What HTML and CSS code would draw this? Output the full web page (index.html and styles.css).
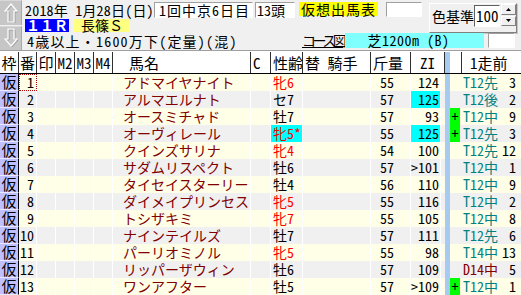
FILE: index.html
```html
<!DOCTYPE html>
<html lang="ja">
<head>
<meta charset="utf-8">
<title>仮想出馬表</title>
<link rel="stylesheet" href="styles.css">
</head>
<body>
<div class="app">
  <div class="top">
    <div class="nav">
      <div class="navbtn">
        <svg width="14" height="20" viewBox="0 0 14 20"><path d="M8 2 L14 9 L11 9 L11 20 L5 20 L5 9 L2 9 Z" fill="none" stroke="#9a9a9a" stroke-width="1"/><path d="M7 1 L13 8 L10 8 L10 19 L4 19 L4 8 L1 8 Z" fill="none" stroke="#fff" stroke-width="1.2"/></svg>
      </div>
      <div class="navbtn">
        <svg width="14" height="20" viewBox="0 0 14 20"><path d="M8 19 L14 12 L11 12 L11 2 L5 2 L5 12 L2 12 Z" fill="none" stroke="#9a9a9a" stroke-width="1"/><path d="M7 18 L13 11 L10 11 L10 1 L4 1 L4 11 L1 11 Z" fill="none" stroke="#fff" stroke-width="1.2"/></svg>
      </div>
    </div>
    <div class="info">
      <div class="line1">
        <span class="date">2018年 1月28日(日)</span>
        <span class="box meet">1回中京6日目</span>
        <span class="box heads">13頭</span>
        <span class="kind">仮想出馬表</span>
        <span class="box empty1"></span>
      </div>
      <div class="colorgrp">
        <span class="clabel">色基準</span>
        <span class="cinput">100</span>
        <span class="spin">
          <span class="sb"><svg width="5" height="3" viewBox="0 0 5 3"><path d="M2.5 0 L5 3 L0 3 Z" fill="#000"/></svg></span>
          <span class="sb"><svg width="5" height="3" viewBox="0 0 5 3"><path d="M0 0 L5 0 L2.5 3 Z" fill="#000"/></svg></span>
        </span>
      </div>
      <div class="line2">
        <span class="race">１１Ｒ</span>
        <span class="rname">長篠Ｓ</span>
      </div>
      <div class="line3">
        <span class="cond">4歳以上・1600万下(定量)(混)</span>
        <span class="course">コース図</span>
        <span class="track">芝1200m (B)</span>
        <span class="box empty2"></span>
      </div>
    </div>
  </div>

  <div class="hdr">
    <span class="c">枠</span><span class="c">番</span><span class="c">印</span><span class="c">M2</span><span class="c">M3</span><span class="c">M4</span>
    <span class="hname">馬名</span><span class="hl">C</span><span class="hl">性齢</span><span class="hl">替 騎手</span><span class="hl">斤量</span>
    <span class="c hzi">ZI</span><span class="bl"></span><span></span><span class="hprev">1走前</span>
  </div>

  <div class="row y"><span class="waku">仮</span><span class="ban focus">1</span><span></span><span></span><span></span><span></span><span class="name">アドマイヤナイト</span><span></span><span class="sa f">牝6</span><span></span><span class="kin">55</span><span class="zi">124</span><span class="pad"></span><span class="bl"></span><span class="mk"></span><span class="prev"><span class="t">T12先</span><span>3</span></span></div>
  <div class="row g"><span class="waku">仮</span><span class="ban">2</span><span></span><span></span><span></span><span></span><span class="name">アルマエルナト</span><span></span><span class="sa">セ7</span><span></span><span class="kin">57</span><span class="zi hi">125</span><span class="pad"></span><span class="bl"></span><span class="mk"></span><span class="prev"><span class="t">T12後</span><span>2</span></span></div>
  <div class="row y"><span class="waku">仮</span><span class="ban">3</span><span></span><span></span><span></span><span></span><span class="name">オースミチャド</span><span></span><span class="sa">牡7</span><span></span><span class="kin">57</span><span class="zi">93</span><span class="pad"></span><span class="bl"></span><span class="mk on">+</span><span class="prev"><span class="t">T12中</span><span>9</span></span></div>
  <div class="row g"><span class="waku">仮</span><span class="ban">4</span><span></span><span></span><span></span><span></span><span class="name">オーヴィレール</span><span></span><span class="sa f hi">牝5*</span><span></span><span class="kin">55</span><span class="zi hi">125</span><span class="pad"></span><span class="bl"></span><span class="mk on">+</span><span class="prev"><span class="t">T12先</span><span>3</span></span></div>
  <div class="row y"><span class="waku">仮</span><span class="ban">5</span><span></span><span></span><span></span><span></span><span class="name">クインズサリナ</span><span></span><span class="sa f">牝4</span><span></span><span class="kin">54</span><span class="zi">100</span><span class="pad"></span><span class="bl"></span><span class="mk"></span><span class="prev"><span class="t">T12先</span><span>12</span></span></div>
  <div class="row g"><span class="waku">仮</span><span class="ban">6</span><span></span><span></span><span></span><span></span><span class="name">サダムリスペクト</span><span></span><span class="sa">牡6</span><span></span><span class="kin">57</span><span class="zi">&gt;101</span><span class="pad"></span><span class="bl"></span><span class="mk"></span><span class="prev"><span class="t">T12中</span><span>1</span></span></div>
  <div class="row y"><span class="waku">仮</span><span class="ban">7</span><span></span><span></span><span></span><span></span><span class="name">タイセイスターリー</span><span></span><span class="sa">牡4</span><span></span><span class="kin">56</span><span class="zi">110</span><span class="pad"></span><span class="bl"></span><span class="mk"></span><span class="prev"><span class="t">T12中</span><span>9</span></span></div>
  <div class="row g"><span class="waku">仮</span><span class="ban">8</span><span></span><span></span><span></span><span></span><span class="name">ダイメイプリンセス</span><span></span><span class="sa f">牝5</span><span></span><span class="kin">55</span><span class="zi">116</span><span class="pad"></span><span class="bl"></span><span class="mk"></span><span class="prev"><span class="t">T12中</span><span>2</span></span></div>
  <div class="row y"><span class="waku">仮</span><span class="ban">9</span><span></span><span></span><span></span><span></span><span class="name">トシザキミ</span><span></span><span class="sa f">牝7</span><span></span><span class="kin">55</span><span class="zi">105</span><span class="pad"></span><span class="bl"></span><span class="mk"></span><span class="prev"><span class="t">T12中</span><span>8</span></span></div>
  <div class="row g"><span class="waku">仮</span><span class="ban">10</span><span></span><span></span><span></span><span></span><span class="name">ナインテイルズ</span><span></span><span class="sa">牡7</span><span></span><span class="kin">57</span><span class="zi">111</span><span class="pad"></span><span class="bl"></span><span class="mk"></span><span class="prev"><span class="t">T12先</span><span>6</span></span></div>
  <div class="row y"><span class="waku">仮</span><span class="ban">11</span><span></span><span></span><span></span><span></span><span class="name">パーリオミノル</span><span></span><span class="sa f">牝5</span><span></span><span class="kin">55</span><span class="zi">98</span><span class="pad"></span><span class="bl"></span><span class="mk"></span><span class="prev"><span class="t">T14中</span><span>13</span></span></div>
  <div class="row g"><span class="waku">仮</span><span class="ban">12</span><span></span><span></span><span></span><span></span><span class="name">リッパーザウィン</span><span></span><span class="sa">牡6</span><span></span><span class="kin">57</span><span class="zi">109</span><span class="pad"></span><span class="bl"></span><span class="mk"></span><span class="prev"><span class="t d">D14中</span><span>5</span></span></div>
  <div class="row y"><span class="waku">仮</span><span class="ban">13</span><span></span><span></span><span></span><span></span><span class="name">ワンアフター</span><span></span><span class="sa">牡5</span><span></span><span class="kin">57</span><span class="zi">&gt;109</span><span class="pad"></span><span class="bl"></span><span class="mk on">+</span><span class="prev"><span class="t">T12中</span><span>1</span></span></div>
</div>
</body>
</html>
```

FILE: styles.css
```css
* { box-sizing: border-box; }

html, body {
  margin: 0;
  padding: 0;
  background: #ffffff;
  overflow: hidden;
}

body {
  font-family: "Noto Sans CJK JP", "Liberation Sans", sans-serif;
  font-size: 14px;
  color: #000;
  font-feature-settings: "hwid";
}

.app {
  width: 521px;
  height: 295px;
  overflow: hidden;
}

/* ---------- top panel ---------- */
.top {
  display: flex;
  height: 52px;
  background: linear-gradient(to bottom, #f0f0f0 0, #f0f0f0 50px, #a0a0a0 50px, #a0a0a0 51px, #ffffff 51px);
}

.nav {
  width: 22px;
  height: 50px;
  display: flex;
  flex-direction: column;
  gap: 1px;
}

.navbtn {
  flex: 1;
  background: #c6c6c6;
  border-right: 1px solid #a8a8a8;
  border-top: 1px solid #d8d8d8;
  display: flex;
  align-items: center;
  justify-content: center;
}

.info {
  flex: 1;
  height: 50px;
  display: grid;
  grid-template-columns: 1fr 88px;
  grid-template-rows: 16px 15px 16px;
  padding: 2px 4px 0 3px;
}

.box {
  background: #ffffff;
  border: 1px solid;
  border-color: #a0a0a0 #ffffff #ffffff #a0a0a0;
}

.line1 {
  grid-column: 1;
  grid-row: 1;
  display: flex;
  align-items: flex-start;
  line-height: 16px;
  white-space: nowrap;
}

.date {
  width: 129px;
  letter-spacing: 0.2px;
}

.meet {
  width: 99px;
  height: 16px;
  line-height: 14px;
  padding-left: 4px;
  letter-spacing: 1px;
}

.heads {
  width: 40px;
  height: 16px;
  line-height: 14px;
  margin-left: 2px;
  padding-left: 1px;
}

.kind {
  width: 79px;
  height: 14px;
  margin-left: 4px;
  background: #ffff00;
  line-height: 14px;
  text-align: center;
  letter-spacing: 1px;
}

.empty1 {
  width: 36px;
  height: 15px;
  margin-left: 8px;
}

.colorgrp {
  grid-column: 2;
  grid-row: 1 / 3;
  margin-top: 1px;
  height: 30px;
  background: #f0f0f0;
  border: 1px solid;
  border-color: #ffffff #808080 #808080 #ffffff;
  box-shadow: 1px 1px 0 #c8c8c8;
  display: flex;
  align-items: flex-start;
  padding: 0 0 0 2px;
  white-space: nowrap;
}

.clabel {
  width: 42px;
  line-height: 22px;
  margin-top: 1px;
  font-size: 14px;
}

.cinput {
  width: 26px;
  height: 22px;
  margin-top: 1px;
  background: #ffffff;
  border: 1px solid;
  border-color: #606060 #ffffff #ffffff #606060;
  font-size: 15px;
  line-height: 20px;
  padding-left: 1px;
}

.spin {
  width: 15px;
  height: 22px;
  margin-left: 1px;
  display: flex;
  flex-direction: column;
  gap: 1px;
}

.sb {
  flex: 1;
  background: #f0f0f0;
  border: 1px solid;
  border-color: #ffffff #808080 #808080 #ffffff;
  display: flex;
  align-items: center;
  justify-content: center;
}

.line2 {
  grid-column: 1;
  grid-row: 2;
  display: flex;
  align-items: center;
  gap: 4px;
  white-space: nowrap;
  font-feature-settings: normal;
}

.race {
  width: 44px;
  height: 13px;
  background: #0000ff;
  color: #ffffff;
  font-weight: bold;
  line-height: 13px;
  text-align: center;
}

.rname {
  width: 57px;
  height: 13px;
  background: #ffff80;
  line-height: 13px;
  padding-left: 8px;
}

.line3 {
  grid-column: 1 / 3;
  grid-row: 3;
  display: flex;
  align-items: flex-start;
  padding-right: 2px;
  white-space: nowrap;
}

.cond {
  flex: 1;
  padding-left: 2px;
  line-height: 16px;
  letter-spacing: 1.2px;
}

.course {
  width: 40px;
  line-height: 15px;
  text-decoration: underline;
  letter-spacing: -3.5px;
}

.track {
  width: 139px;
  height: 15px;
  margin-left: 3px;
  background: #80ffff;
  line-height: 15px;
  text-align: center;
  padding-right: 12px;
  letter-spacing: 0.5px;
}

.empty2 {
  width: 27px;
  height: 15px;
  margin-left: 4px;
}

/* ---------- grid ---------- */
.hdr, .row {
  display: grid;
  grid-template-columns: 19px 18px 19px 19px 19px 19px 138px 20px 32px 68px 40px 30px 4px 5px 12px 59px;
  width: 521px;
}

.hdr {
  height: 22px;
  background: #ffffff;
  border-bottom: 1px solid #000000;
  font-size: 15px;
  line-height: 21px;
  white-space: nowrap;
}

.hdr > span {
  border-right: 1px solid #303030;
}

.hdr .c { text-align: center; }
.hdr .hname { padding-left: 16px; }
.hdr .hl { padding-left: 2px; }
.hdr .hzi { grid-column: span 2; }
.hdr .bl { border-right: none; background: #a6caf0; }
.hdr .hprev { border-right: none; padding-left: 8px; }

.row {
  height: 17px;
  line-height: 17px;
  white-space: nowrap;
}

.row.y { background: #ffffe8; }
.row.g { background: #f0f0f0; }

.row > span {
  border-right: 1px solid #ffffff;
}

.waku {
  background: #c0c0ff;
  border-right: 1px solid #000000 !important;
  border-bottom: 1px solid #e8e8ff;
  text-align: center;
  font-size: 15px;
  line-height: 16px;
}

.ban {
  text-align: right;
  padding-right: 2px;
}

.focus {
  outline: 1px dotted #b00000;
  outline-offset: -1px;
}

.name {
  color: #800000;
  padding-left: 10px;
  font-feature-settings: normal;
}

.sa { padding-left: 2px; }
.sa.f { color: #ff0000; }
.hi { background: #00ffff; }

.kin { padding-left: 9px; }

.zi {
  text-align: right;
  padding-right: 1px;
}

.row .pad { border-right: none; }
.row .bl { border-right: none; background: #a6caf0; }

.mk {
  text-align: center;
  border-right: 2px solid transparent !important;
  background-clip: padding-box;
}

.mk.on { background-color: #00ff00; }

.prev {
  display: flex;
  justify-content: space-between;
  padding: 0 5px 0 1px;
  border-right: none !important;
}

.prev .t { color: #008080; }
.prev .t.d { color: #800000; }
```
